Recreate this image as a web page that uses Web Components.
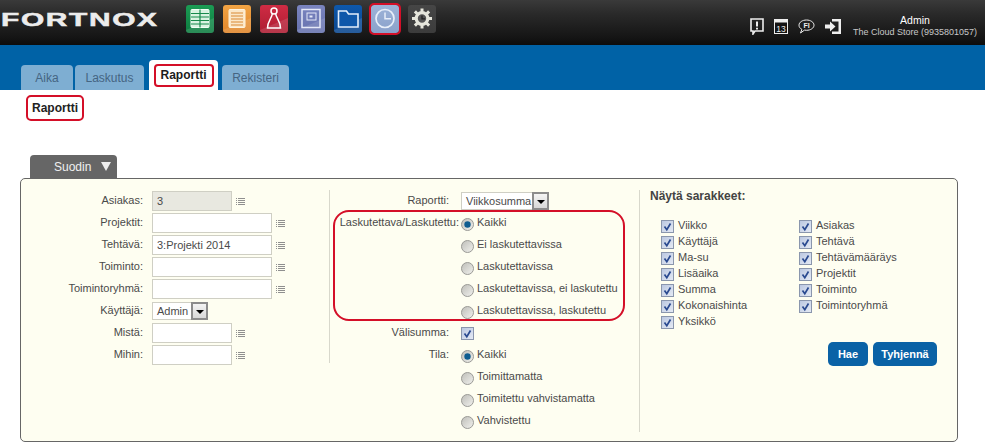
<!DOCTYPE html>
<html lang="fi">
<head>
<meta charset="utf-8">
<title>Fortnox</title>
<style>
  html, body { margin: 0; padding: 0; background: #fff; }
  body { font-family: "Liberation Sans", Arial, sans-serif; font-size: 11px; color: #444; width: 985px; height: 446px; overflow: hidden; }
</style>
</head>
<body>
<fx-topbar></fx-topbar>
<fx-tabs>
  <fx-tab width="52" label="Aika"></fx-tab>
  <fx-tab width="69" label="Laskutus"></fx-tab>
  <fx-tab width="69" label="Raportti" active></fx-tab>
  <fx-tab width="67" label="Rekisteri"></fx-tab>
</fx-tabs>
<fx-subnav>Raportti</fx-subnav>
<fx-filter title="Suodin">
  <fx-column slot="one" style="width:308px;height:173px;border-right:1px solid #d8d8cc">
    <fx-row label="Asiakas:" cell="131"><fx-input value="3" disabled></fx-input><fx-lookup></fx-lookup></fx-row>
    <fx-row label="Projektit:" cell="131"><fx-input wide></fx-input><fx-lookup></fx-lookup></fx-row>
    <fx-row label="Tehtävä:" cell="131"><fx-input wide value="3:Projekti 2014"></fx-input><fx-lookup></fx-lookup></fx-row>
    <fx-row label="Toiminto:" cell="131"><fx-input wide></fx-input><fx-lookup></fx-lookup></fx-row>
    <fx-row label="Toimintoryhmä:" cell="131"><fx-input wide></fx-input><fx-lookup></fx-lookup></fx-row>
    <fx-row label="Käyttäjä:" cell="131"><fx-select value="Admin" width="56"></fx-select></fx-row>
    <fx-row label="Mistä:" cell="131"><fx-input></fx-input><fx-lookup></fx-lookup></fx-row>
    <fx-row label="Mihin:" cell="131"><fx-input></fx-input><fx-lookup></fx-lookup></fx-row>
  </fx-column>
  <fx-column slot="two" style="width:309px;height:242px;border-right:1px solid #d8d8cc">
    <fx-row label="Raportti:" cell="131" gutter="12"><fx-select value="Viikkosumma" width="88"></fx-select></fx-row>
    <fx-mark>
      <fx-row label="Laskutettava/Laskutettu:" cell="131" gutter="2"><fx-radio checked>Kaikki</fx-radio></fx-row>
      <fx-row cell="131"><fx-radio>Ei laskutettavissa</fx-radio></fx-row>
      <fx-row cell="131"><fx-radio>Laskutettavissa</fx-radio></fx-row>
      <fx-row cell="131"><fx-radio>Laskutettavissa, ei laskutettu</fx-radio></fx-row>
      <fx-row cell="131"><fx-radio>Laskutettavissa, laskutettu</fx-radio></fx-row>
    </fx-mark>
    <fx-row label="Välisumma:" cell="131" gutter="12"><fx-check></fx-check></fx-row>
    <fx-row label="Tila:" cell="131" gutter="12"><fx-radio checked>Kaikki</fx-radio></fx-row>
    <fx-row cell="131"><fx-radio>Toimittamatta</fx-radio></fx-row>
    <fx-row cell="131"><fx-radio>Toimitettu vahvistamatta</fx-radio></fx-row>
    <fx-row cell="131"><fx-radio>Vahvistettu</fx-radio></fx-row>
  </fx-column>
  <fx-columns-picker slot="three" heading="Näytä sarakkeet:">
    <fx-check slot="left">Viikko</fx-check>
    <fx-check slot="left">Käyttäjä</fx-check>
    <fx-check slot="left">Ma-su</fx-check>
    <fx-check slot="left">Lisäaika</fx-check>
    <fx-check slot="left">Summa</fx-check>
    <fx-check slot="left">Kokonaishinta</fx-check>
    <fx-check slot="left">Yksikkö</fx-check>
    <fx-check slot="right">Asiakas</fx-check>
    <fx-check slot="right">Tehtävä</fx-check>
    <fx-check slot="right">Tehtävämääräys</fx-check>
    <fx-check slot="right">Projektit</fx-check>
    <fx-check slot="right">Toiminto</fx-check>
    <fx-check slot="right">Toimintoryhmä</fx-check>
    <fx-button slot="actions" width="40">Hae</fx-button>
    <fx-button slot="actions" width="64">Tyhjennä</fx-button>
  </fx-columns-picker>
</fx-filter>

<script>
const GLOSS = `<path d="M0 25L28 13V25a3 3 0 0 1-3 3H3a3 3 0 0 1-3-3z" fill="#fff" opacity=".12"/>`;

const APP_ICONS = {
    sheet: {bg: ["#1b9c54", "#0d7c40"], art: `
        <rect x="5" y="4.500" width="18" height="18" rx="1" fill="#d9f2e0" stroke="#f2fff5"/>
        <path d="M14 4.500v18M5 8.500h18M5 12h18M5 15.500h18M5 19h18" stroke="#178a4b" stroke-width="1.200"/>`},
    note: {bg: ["#f2a444", "#e0852a"], art: `
        <rect x="6" y="4.500" width="16" height="18" rx="1" fill="#fbe7c8" stroke="#fff3dd"/>
        <path d="M8 8h12M8 11h12M8 14h12M8 17h12M8 20h12" stroke="#d98a35" stroke-width="1.100"/>`},
    bag: {bg: ["#cf2c44", "#ad1c32"], art: `
        <circle cx="14" cy="6" r="3" fill="none" stroke="#fff" stroke-width="1.500"/>
        <path d="M12.300 8.800C12 13 7.500 16 7.500 23h13c0-7-4.500-10-4.800-14.200" fill="none" stroke="#fff" stroke-width="1.500"/>`},
    safe: {bg: ["#7a84bf", "#6672ae"], art: `
        <rect x="5" y="4.500" width="18" height="18" fill="none" stroke="#e4e8f7" stroke-width="1.500"/>
        <rect x="10" y="8" width="9" height="7" fill="none" stroke="#e4e8f7"/>
        <rect x="12.500" y="10.500" width="3" height="2" fill="#e4e8f7"/>`},
    folder: {bg: ["#0e58ab", "#0a468e"], art: `
        <path d="M4.500 6h8l2 3H24v13H4.500z" fill="#0f58aa" stroke="#e3eefb" stroke-width="1.600"/>`},
    clock: {bg: ["#9db3d8", "#8aa1cb"], art: `
        <circle cx="14" cy="13.500" r="9" fill="none" stroke="#e8eef9" stroke-width="1.700"/>
        <path d="M14 7.500v6.300h6" fill="none" stroke="#e8eef9" stroke-width="1.500"/>`},
    gear: {bg: ["#464646", "#3c3c3c"], art: `
        <circle cx="14" cy="13.500" r="5.800" fill="#555" stroke="#e6e6dc" stroke-width="3.200"/>
        <path d="M14 3.500v4M14 19.500v4M4 13.500h4M20 13.500h4M6.900 6.400l2.800 2.800M18.300 17.800l2.800 2.800M21.100 6.400l-2.800 2.800M9.700 17.800l-2.800 2.800" stroke="#e6e6dc" stroke-width="3"/>
        <path d="M14 10.500v3.300h3" fill="none" stroke="#222" stroke-width="1.300"/>`}
};

class FxAppIcon extends HTMLElement {
    connectedCallback() {
        const kind = this.getAttribute("kind");
        const icon = APP_ICONS[kind];
        const id = "g" + kind;
        const marked = this.hasAttribute("marked");
        const glossy = kind !== "gear" && kind !== "clock";
        this.attachShadow({mode: "open"}).innerHTML = `
        <style>
            :host { display: block; width: 28px; height: 28px; position: relative; }
            svg { display: block; }
            .mark { position: absolute; inset: -2px; border: 2px solid #d40f28; border-radius: 5px; }
        </style>
        <svg width="28" height="28" viewBox="0 0 28 28">
            <defs><linearGradient id="${id}" x1="0" y1="0" x2="0" y2="1">
                <stop offset="0" stop-color="${icon.bg[0]}"/><stop offset="1" stop-color="${icon.bg[1]}"/>
            </linearGradient></defs>
            <rect width="28" height="28" rx="3" fill="url(#${id})"/>
            ${glossy ? GLOSS : ""}
            ${icon.art}
        </svg>
        ${marked ? '<div class="mark"></div>' : ""}`;
    }
}

class FxTopbar extends HTMLElement {
    constructor() {
        super();
        this.attachShadow({mode: "open"}).innerHTML = `
        <style>
            :host {
                display: flex; height: 45px; box-sizing: border-box;
                background: linear-gradient(#3a3a3a, #2a2a2a 30%, #141414 85%, #0c0c0c);
            }
            .logo {
                width: 157px; margin: 9px 0 0 1px; height: 22px; white-space: nowrap;
                color: #ececec; font: bold 18px/22px "Liberation Sans", sans-serif; letter-spacing: 1px;
                -webkit-text-stroke: .5px #ececec;
                transform: scaleX(1.66); transform-origin: 0 50%;
            }
            .apps { display: flex; gap: 9px; margin: 5px 0 0 28px; }
            .tools { display: flex; align-items: center; margin: 15px 0 0 314px; height: 22px; }
            .tools svg { display: block; }
            .user { margin: 14px 7px 0 10px; width: 126px; text-align: center; color: #c8c8c8; font-size: 9px; line-height: 12px; white-space: nowrap; }
            .user b { display: block; font-weight: normal; color: #fff; font-size: 10.500px; }
        </style>
        <div class="logo">FORTNOX</div>
        <div class="apps">
            <fx-app-icon kind="sheet"></fx-app-icon>
            <fx-app-icon kind="note"></fx-app-icon>
            <fx-app-icon kind="bag"></fx-app-icon>
            <fx-app-icon kind="safe"></fx-app-icon>
            <fx-app-icon kind="folder"></fx-app-icon>
            <fx-app-icon kind="clock" marked></fx-app-icon>
            <fx-app-icon kind="gear"></fx-app-icon>
        </div>
        <div class="tools">
            <svg width="14" height="17" viewBox="0 0 14 17" style="margin-right:10px">
                <path d="M1 1h12v12H5l-2 3v-3H1z" fill="none" stroke="#eee" stroke-width="1.600"/>
                <path d="M7 3.500v5M7 9.800v1.600" stroke="#eee" stroke-width="2"/>
            </svg>
            <svg width="14" height="15" viewBox="0 0 14 15" style="margin-right:10px">
                <rect x="0.500" y="0.500" width="13" height="14" fill="#141414" stroke="#eee"/>
                <rect x="0" y="0" width="14" height="3.500" fill="#eee"/>
                <text x="7" y="12.500" text-anchor="middle" font-family="Liberation Sans" font-size="8.500" fill="#eee">13</text>
            </svg>
            <svg width="17" height="15" viewBox="0 0 17 15" style="margin-right:10px">
                <path d="M8.500 1C4.400 1 1 3.200 1 6.200c0 1.800 1.100 3.300 2.900 4.200L2.500 14l4-2.900c.6.1 1.300.2 2 .2 4.100 0 7.500-2.200 7.500-5.100S12.600 1 8.500 1z" fill="none" stroke="#eee" stroke-width="1"/>
                <text x="8.500" y="9" text-anchor="middle" font-family="Liberation Sans" font-size="7" font-weight="bold" fill="#eee">FI</text>
            </svg>
            <svg width="17" height="17" viewBox="0 0 17 17">
                <path d="M7 1h9v15H7v-2.500h6.500v-10H7z" fill="#eee"/>
                <path d="M0 6.500h5V3.500l5.500 5-5.500 5v-3H0z" fill="#eee"/>
            </svg>
        </div>
        <div class="user"><b>Admin</b>The Cloud Store (9935801057)</div>`;
    }
}

class FxTabs extends HTMLElement {
    constructor() {
        super();
        this.attachShadow({mode: "open"}).innerHTML = `
        <style>
            :host {
                display: flex; align-items: flex-end; gap: 2px; height: 45px; box-sizing: border-box;
                padding-left: 21px; background: #0062a6;
            }
        </style>
        <slot></slot>`;
    }
}

class FxTab extends HTMLElement {
    connectedCallback() {
        const active = this.hasAttribute("active");
        this.attachShadow({mode: "open"}).innerHTML = `
        <style>
            :host {
                display: flex; align-items: center; justify-content: center; box-sizing: border-box;
                width: ${this.getAttribute("width")}px; height: ${active ? 30 : 25}px;
                margin: 0 ${active ? 2 : 0}px 0 ${active ? 3 : 0}px;
                background: ${active ? "#fff" : "#7eaed2"}; color: ${active ? "#1c1c1c" : "#456582"};
                border-radius: 4px 4px 0 0; font-size: 12px;
            }
            span { display: block; }
            .mark {
                border: 2px solid #d40f28; border-radius: 4px; padding: 0 5px; height: 23px; line-height: 19px;
                box-sizing: border-box; font-weight: bold; white-space: nowrap; margin-top: 0;
            }
        </style>
        <span class="${active ? "mark" : ""}">${this.getAttribute("label")}</span>`;
    }
}

class FxSubnav extends HTMLElement {
    constructor() {
        super();
        this.attachShadow({mode: "open"}).innerHTML = `
        <style>
            :host { display: block; height: 65px; box-sizing: border-box; padding: 5px 0 0 26px; }
            div {
                display: inline-block; box-sizing: border-box; height: 26px; padding: 0 3.500px 0 4px; line-height: 22px;
                border: 2px solid #d40f28; border-radius: 5px; font: bold 12px/22px "Liberation Sans", sans-serif; color: #222;
            }
        </style>
        <div><slot></slot></div>`;
    }
}

class FxFilter extends HTMLElement {
    connectedCallback() {
        this.attachShadow({mode: "open"}).innerHTML = `
        <style>
            :host { display: block; margin-left: 20px; width: 938px; }
            .tab {
                display: flex; align-items: center; box-sizing: border-box; width: 87px; height: 23px; margin-left: 10px;
                padding-left: 24px; gap: 10px; background: #666; color: #f0f0f0; border-radius: 4px 4px 0 0; font-size: 12px;
            }
            .tab i { width: 0; height: 0; border-left: 5.500px solid transparent; border-right: 5.500px solid transparent; border-top: 9px solid #eee; }
            .body {
                display: flex; align-items: flex-start; box-sizing: border-box; height: 264px; padding: 11px 0 0 0;
                background: #fefef1; border: 1px solid #666; border-radius: 5px;
            }
        </style>
        <div class="tab">${this.getAttribute("title")}<i></i></div>
        <div class="body">
            <slot name="one"></slot>
            <slot name="two"></slot>
            <slot name="three"></slot>
        </div>`;
    }
}

class FxColumn extends HTMLElement {
    constructor() {
        super();
        this.attachShadow({mode: "open"}).innerHTML = `
        <style>:host { display: block; box-sizing: content-box; }</style>
        <slot></slot>`;
    }
}

class FxRow extends HTMLElement {
    connectedCallback() {
        const label = this.getAttribute("label") || "";
        const gutter = this.getAttribute("gutter") || 9;
        this.attachShadow({mode: "open"}).innerHTML = `
        <style>
            :host { display: flex; align-items: center; height: 22px; }
            label {
                display: block; box-sizing: border-box; width: ${this.getAttribute("cell")}px; flex: none; text-align: right;
                padding-right: ${gutter}px; white-space: nowrap; position: relative; top: -1px; color: #4a4a4a;
            }
            .value { display: flex; align-items: center; }
        </style>
        <label>${label}</label><div class="value"><slot></slot></div>`;
    }
}

class FxInput extends HTMLElement {
    connectedCallback() {
        const disabled = this.hasAttribute("disabled");
        this.attachShadow({mode: "open"}).innerHTML = `
        <style>
            :host {
                display: block; box-sizing: border-box; height: 20px; width: ${this.hasAttribute("wide") ? 120 : 80}px;
                border: 1px solid #cfcfc4; background: ${disabled ? "#e8e8e0" : "#fff"};
                padding-left: 4px; line-height: 18px; color: #4a4a4a; white-space: nowrap;
            }
        </style>${this.getAttribute("value") || ""}`;
    }
}

class FxLookup extends HTMLElement {
    constructor() {
        super();
        this.attachShadow({mode: "open"}).innerHTML = `
        <style>
            :host { display: block; margin-left: 4px; }
            svg { display: block; }
        </style>
        <svg width="9" height="7" viewBox="0 0 9 7">
            <path d="M0 .5h1M2 .5h7M0 2.500h1M2 2.500h7M0 4.500h1M2 4.500h7M0 6.500h1M2 6.500h7" stroke="#8f8f8f"/>
        </svg>`;
    }
}

class FxSelect extends HTMLElement {
    connectedCallback() {
        this.attachShadow({mode: "open"}).innerHTML = `
        <style>
            :host {
                display: flex; justify-content: space-between; box-sizing: border-box; height: 18px;
                width: ${this.getAttribute("width")}px; border: 1px solid #cfcfc4; background: #fff;
                padding-left: 4px; line-height: 16px; color: #4a4a4a; white-space: nowrap;
            }
            .btn {
                box-sizing: border-box; width: 17px; height: 18px; margin: -1px -1px 0 0; border: 2px solid #8c8c8c;
                background: linear-gradient(#f4f4f4, #d8d8d8); display: flex; align-items: center; justify-content: center;
            }
            .btn i { width: 0; height: 0; border-left: 4px solid transparent; border-right: 4px solid transparent; border-top: 4px solid #000; margin-top: 2px; }
        </style>
        ${this.getAttribute("value")}<div class="btn"><i></i></div>`;
    }
}

class FxRadio extends HTMLElement {
    connectedCallback() {
        const checked = this.hasAttribute("checked");
        this.attachShadow({mode: "open"}).innerHTML = `
        <style>
            :host { display: flex; align-items: center; color: #4a4a4a; white-space: nowrap; }
            svg { display: block; margin: 2px 3px 0 0; }
            span { position: relative; top: -1px; }
        </style>
        <svg width="13" height="13" viewBox="0 0 13 13">
            <defs><linearGradient id="r" x1="0" y1="0" x2="1" y2="1"><stop offset="0" stop-color="#bdbdb8"/><stop offset="1" stop-color="#f2f2ee"/></linearGradient></defs>
            <circle cx="6.500" cy="6.500" r="6" fill="url(#r)" stroke="#9a9a96"/>
            ${checked ? '<circle cx="6.500" cy="6.500" r="3.200" fill="#0f5d90"/>' : ""}
        </svg><span><slot></slot></span>`;
    }
}

class FxCheck extends HTMLElement {
    constructor() {
        super();
        this.attachShadow({mode: "open"}).innerHTML = `
        <style>
            :host { display: flex; align-items: center; height: 16px; color: #4a4a4a; white-space: nowrap; }
            svg { display: block; margin: 1px 4px 0 0; }
            span { position: relative; top: -1px; }
        </style>
        <svg width="13" height="13" viewBox="0 0 13 13">
            <defs><linearGradient id="c" x1="0" y1="0" x2="1" y2="1"><stop offset="0" stop-color="#b9c6e0"/><stop offset="1" stop-color="#e6ebf5"/></linearGradient></defs>
            <rect x=".5" y=".5" width="12" height="12" fill="url(#c)" stroke="#8a96ad"/>
            <path d="M3.500 6.500l2.300 3.200 3.700-6.200" fill="none" stroke="#2a4a90" stroke-width="1.700"/>
        </svg><span><slot></slot></span>`;
    }
}

class FxButton extends HTMLElement {
    connectedCallback() {
        this.attachShadow({mode: "open"}).innerHTML = `
        <style>
            :host {
                display: flex; align-items: center; justify-content: center; box-sizing: border-box;
                width: ${this.getAttribute("width")}px; height: 24px; background: #0a62a6; color: #fff;
                border-radius: 5px; font-size: 11px; font-weight: bold;
            }
        </style>
        <slot></slot>`;
    }
}

class FxMark extends HTMLElement {
    constructor() {
        super();
        this.attachShadow({mode: "open"}).innerHTML = `
        <style>
            :host { display: block; position: relative; }
            .ring {
                position: absolute; left: 3px; right: 14px; top: -2px; bottom: 1px;
                border: 2px solid #d40f28; border-radius: 16px; pointer-events: none;
            }
        </style>
        <slot></slot><div class="ring"></div>`;
    }
}

class FxColumnsPicker extends HTMLElement {
    connectedCallback() {
        this.attachShadow({mode: "open"}).innerHTML = `
        <style>
            :host { display: block; width: 297px; padding-left: 10px; box-sizing: content-box; margin-top: -1px; }
            h3 { margin: 0; font: bold 12px/14px "Liberation Sans", sans-serif; color: #444; }
            .cols { display: grid; grid-template-columns: 138px 1fr; margin: 15px 0 0 11px; height: 114px; }
            .cols div { display: flex; flex-direction: column; }
            .actions { display: flex; justify-content: flex-end; gap: 5px; padding-right: 10px; margin-top: 10px; }
        </style>
        <h3>${this.getAttribute("heading")}</h3>
        <div class="cols">
            <div><slot name="left"></slot></div>
            <div><slot name="right"></slot></div>
        </div>
        <div class="actions"><slot name="actions"></slot></div>`;
    }
}

customElements.define("fx-app-icon", FxAppIcon);
customElements.define("fx-topbar", FxTopbar);
customElements.define("fx-tabs", FxTabs);
customElements.define("fx-tab", FxTab);
customElements.define("fx-subnav", FxSubnav);
customElements.define("fx-filter", FxFilter);
customElements.define("fx-column", FxColumn);
customElements.define("fx-row", FxRow);
customElements.define("fx-input", FxInput);
customElements.define("fx-lookup", FxLookup);
customElements.define("fx-select", FxSelect);
customElements.define("fx-radio", FxRadio);
customElements.define("fx-check", FxCheck);
customElements.define("fx-button", FxButton);
customElements.define("fx-mark", FxMark);
customElements.define("fx-columns-picker", FxColumnsPicker);
</script>
</body>
</html>
